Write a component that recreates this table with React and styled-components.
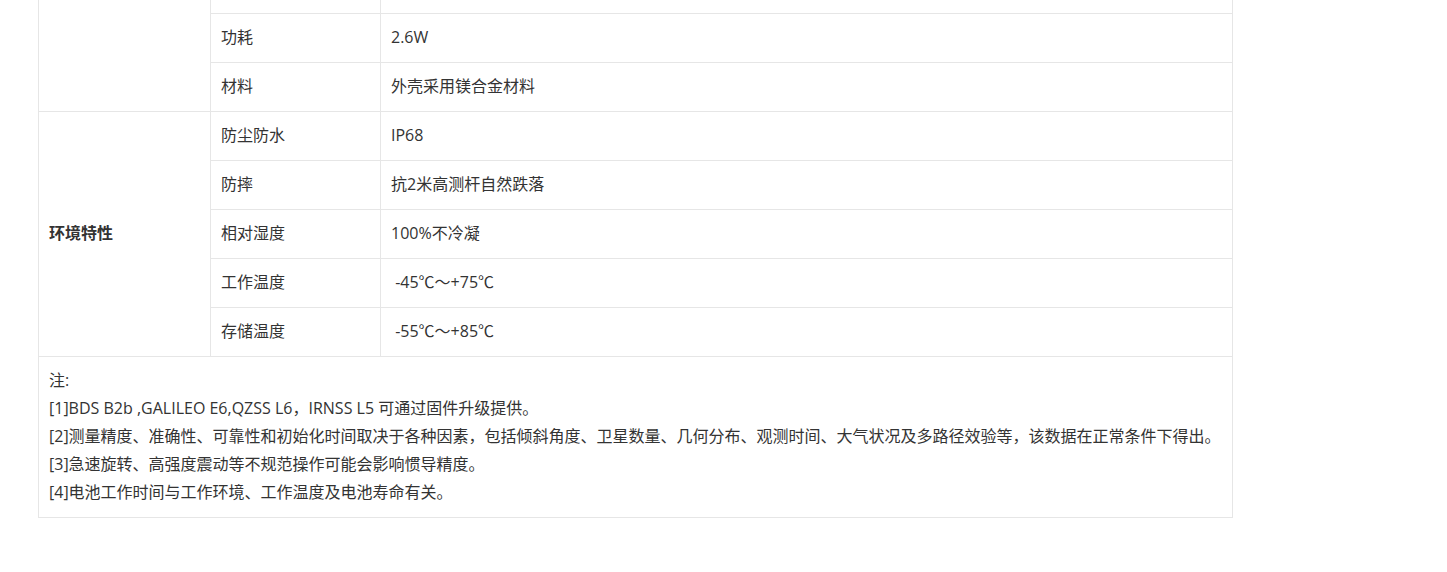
import React from "react";
import styled, { createGlobalStyle } from "styled-components";

const GlobalStyle = createGlobalStyle`
  body {
    margin: 0;
    background: #fff;
    font-family: "Open Sans", "Noto Sans CJK SC", sans-serif;
    color: #333;
  }
`;

const Page = styled.div`
  padding: 0 0 0 38px;
  width: 1195px;
`;

const Table = styled.table`
  width: 100%;
  border-collapse: collapse;
  table-layout: fixed;
  font-size: 16px;
  color: #333;
`;

const Td = styled.td`
  border: 1px solid #e6e6e6;
  height: ${(p) => (p.$short ? "13px" : "49px")};
  padding: 0 10px 2px;
  box-sizing: border-box;
  vertical-align: middle;
  font-weight: ${(p) => (p.$bold ? 700 : 400)};
  line-height: 20px;
`;

const TopRow = styled.tr`
  td {
    border-top: none;
    padding: 0;
  }
`;

const NoteCell = styled.td`
  border: 1px solid #e6e6e6;
  padding: 9px 10px 11px;
  line-height: 28px;
  font-size: 16px;
`;

const NoteLine = styled.div`
  white-space: nowrap;
`;

const power = [
  ["功耗", "2.6W"],
  ["材料", "外壳采用镁合金材料"],
];

const env = [
  ["防尘防水", "IP68"],
  ["防摔", "抗2米高测杆自然跌落"],
  ["相对湿度", "100%不冷凝"],
  ["工作温度", "\u00a0-45℃～+75℃"],
  ["存储温度", "\u00a0-55℃～+85℃"],
];

const notes = [
  "注:",
  "[1]BDS B2b ,GALILEO E6,QZSS L6，IRNSS L5 可通过固件升级提供。",
  "[2]测量精度、准确性、可靠性和初始化时间取决于各种因素，包括倾斜角度、卫星数量、几何分布、观测时间、大气状况及多路径效验等，该数据在正常条件下得出。",
  "[3]急速旋转、高强度震动等不规范操作可能会影响惯导精度。",
  "[4]电池工作时间与工作环境、工作温度及电池寿命有关。",
];

const App = () => {
  return (
    <Page>
      <GlobalStyle />
      <Table>
        <colgroup>
          <col style={{ width: 172 }} />
          <col style={{ width: 170 }} />
          <col />
        </colgroup>
        <tbody>
          <TopRow>
            <Td rowSpan={3}></Td>
            <Td $short></Td>
            <Td $short></Td>
          </TopRow>
          {power.map(([k, v]) => (
            <tr key={k}>
              <Td>{k}</Td>
              <Td>{v}</Td>
            </tr>
          ))}
          {env.map(([k, v], i) => (
            <tr key={k}>
              {i === 0 && (
                <Td rowSpan={env.length} $bold>
                  环境特性
                </Td>
              )}
              <Td>{k}</Td>
              <Td>{v}</Td>
            </tr>
          ))}
          <tr>
            <NoteCell colSpan={3}>
              {notes.map((n) => (
                <NoteLine key={n}>{n}</NoteLine>
              ))}
            </NoteCell>
          </tr>
        </tbody>
      </Table>
    </Page>
  );
};

export default App;
